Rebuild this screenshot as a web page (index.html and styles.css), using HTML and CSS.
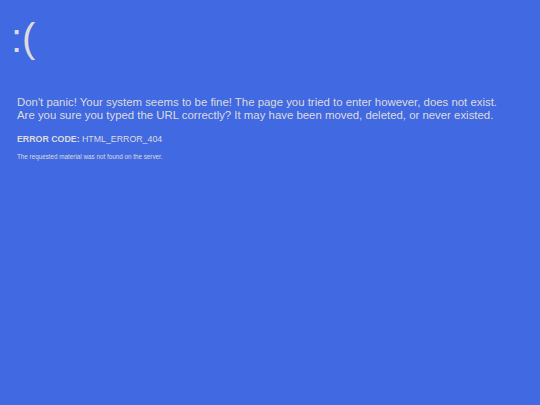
FILE: index.html
```html
<!DOCTYPE html>
<html lang="en">
<head>
    <meta charset="UTF-8">
    <meta name="viewport" content="width=device-width, initial-scale=1.0">
    <title>404</title>
    <link rel="stylesheet" href="styles.css">
</head>
<body>
    <main class="bsod">
        <h1 class="face">:(</h1>
        <p class="msg">Don't panic! Your system seems to be fine! The page you tried to enter however, does not exist.<br>Are you sure you typed the URL correctly? It may have been moved, deleted, or never existed.</p>
        <p class="code"><b>ERROR CODE:</b> HTML_ERROR_404</p>
        <p class="small">The requested material was not found on the server.</p>
    </main>
</body>
</html>
```

FILE: styles.css
```css
html, body { margin: 0; height: 100%; }
body { background: #4169e1; color: #dcdcdc; font-family: "Liberation Sans", Arial, sans-serif; }
.bsod { padding: 15px 17px; }
.face { font-size: 40px; font-weight: normal; margin: 0 0 0 -6px; line-height: 46px; }
.msg { font-size: 11.4px; line-height: 13px; margin: 35px 0 0; }
.code { font-size: 8.8px; margin: 12px 0 0; }
.small { font-size: 6.3px; margin: 9px 0 0; }
```
